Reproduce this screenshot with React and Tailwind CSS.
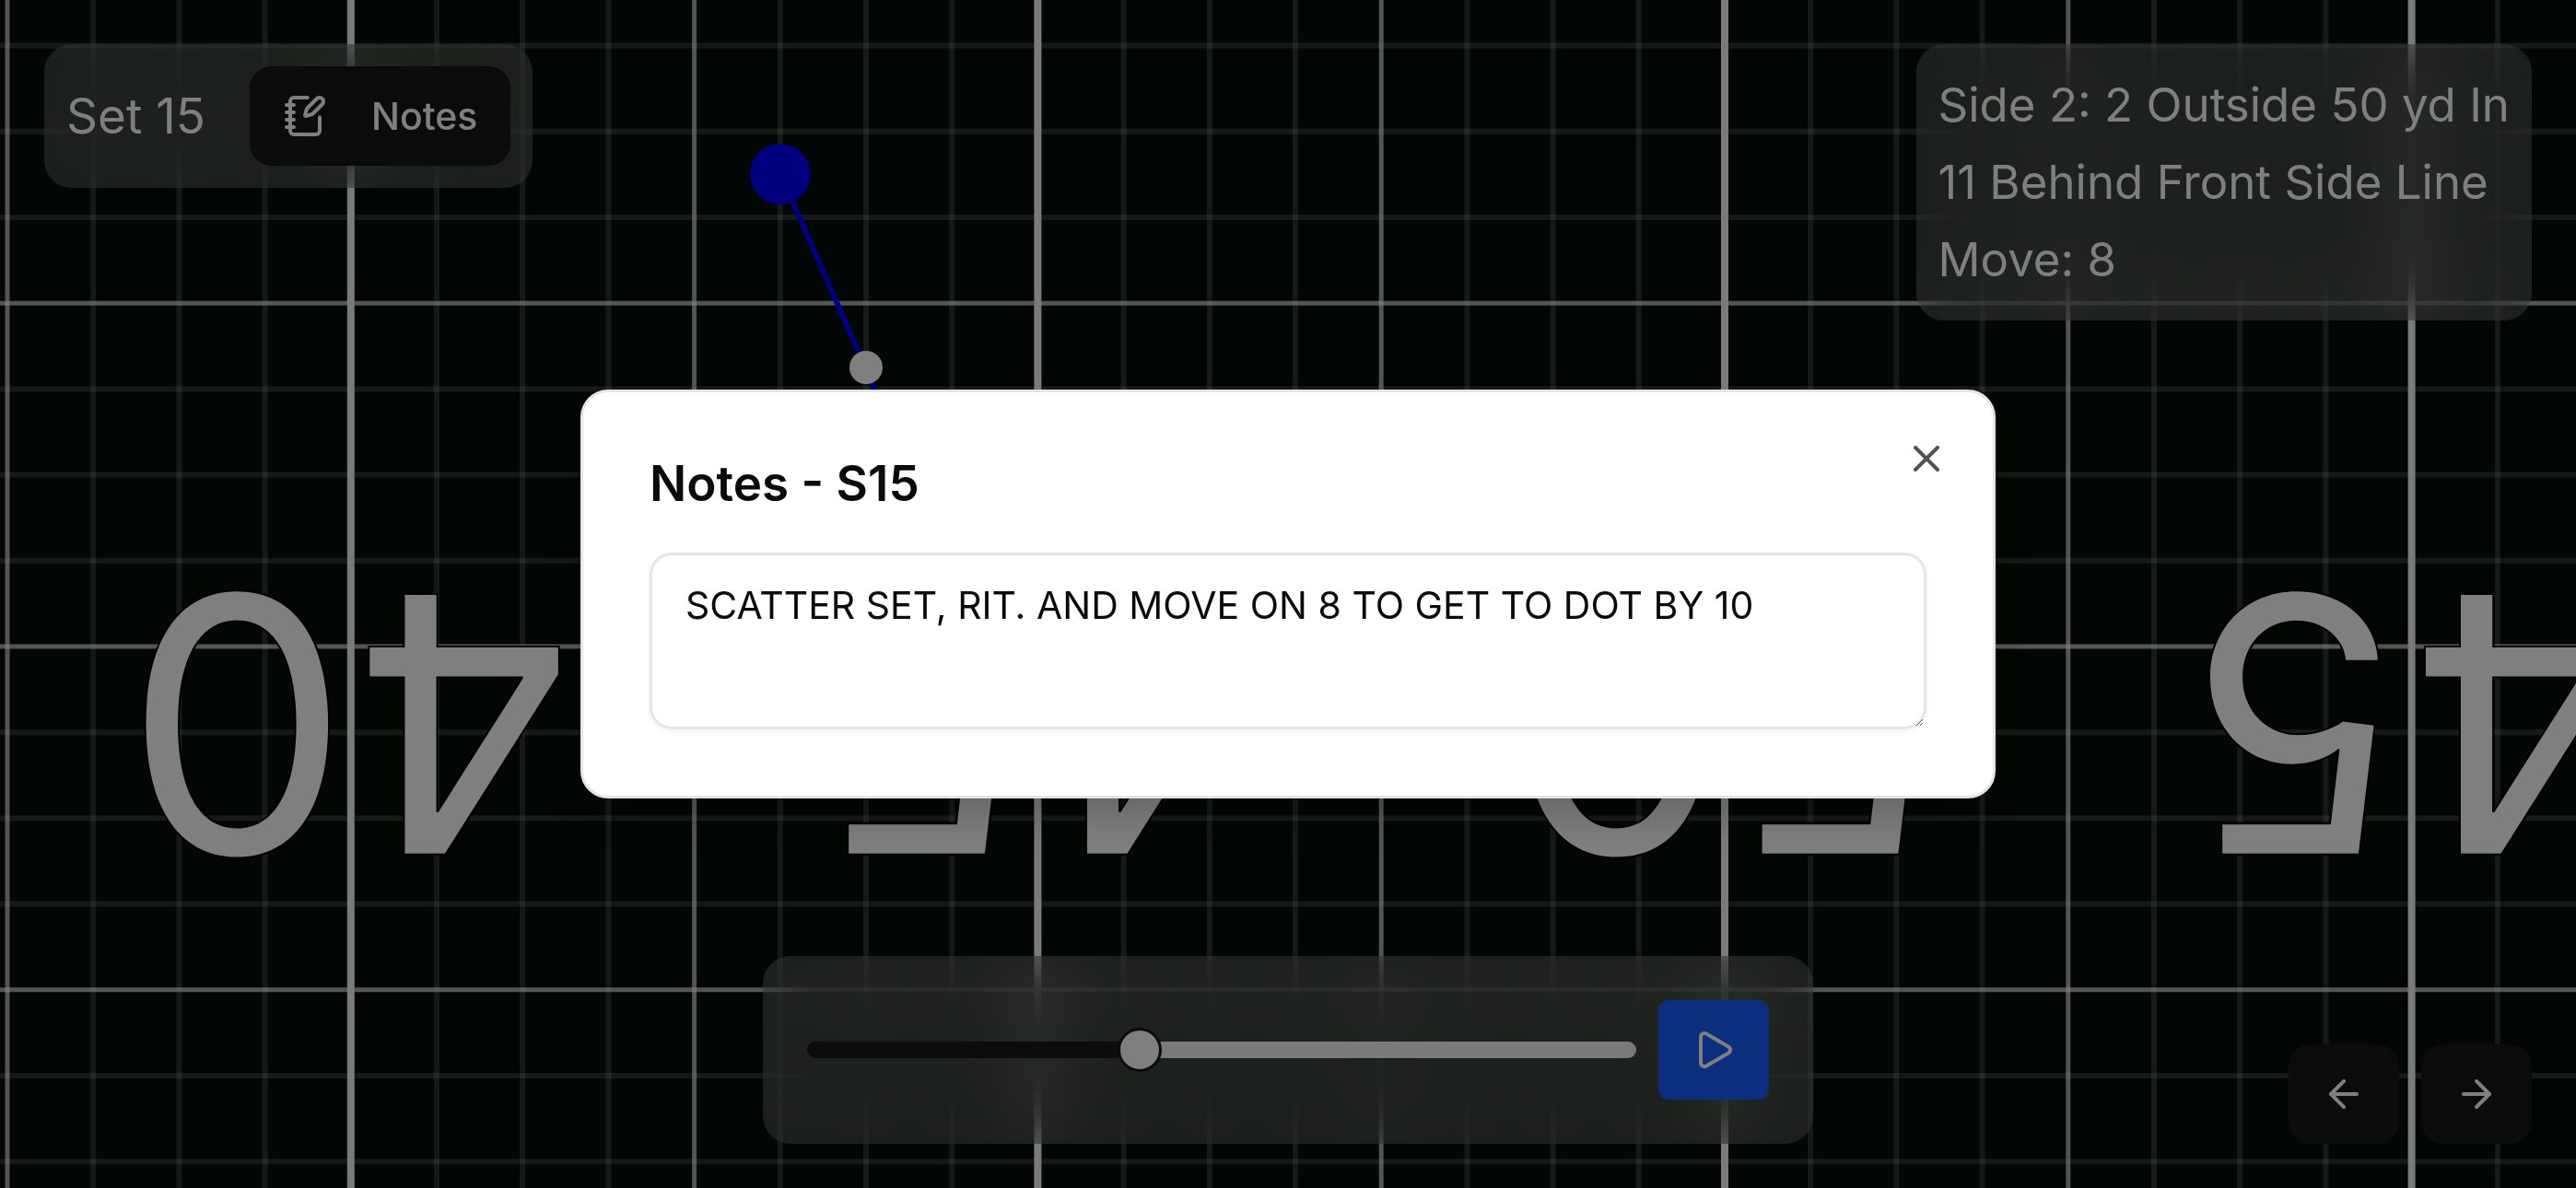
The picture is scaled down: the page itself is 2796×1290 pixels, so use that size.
import { ArrowLeft, ArrowRight, NotebookPen, Play, X } from "lucide-react";

const STEP = 93.2;
const columns = Array.from({ length: 31 }, (_, i) => ({ i, at: 8 + i * STEP }));
const rows = Array.from({ length: 14 }, (_, i) => ({ i, at: 49.6 + i * STEP }));
const yardNumbers = [
  { label: "40", x: 382 },
  { label: "45", x: 1127 },
  { label: "50", x: 1872 },
  { label: "45", x: 2618 },
];

function Field() {
  const minorColumns = columns.filter(({ i }) => i % 4 !== 0);
  const minorRows = rows.filter(({ i }) => i % 4 !== 3);
  return (
    <svg
      className="absolute inset-0 size-full"
      viewBox="0 0 2796 1290"
      preserveAspectRatio="xMidYMid slice"
      aria-label="Field"
    >
      <g stroke="#ffffff" strokeOpacity="0.16" strokeWidth="6">
        {minorColumns.map(({ i, at }) => (
          <line key={`c${i}`} x1={at} x2={at} y1="0" y2="1290" />
        ))}
        {minorRows.map(({ i, at }) => (
          <line key={`r${i}`} x1="0" x2="2796" y1={at} y2={at} />
        ))}
      </g>
      <g stroke="#ffffff" strokeOpacity="0.65" strokeWidth="5">
        {columns.filter(({ i }) => i % 8 === 0).map(({ i, at }) => (
          <line key={`c${i}`} x1={at} x2={at} y1="0" y2="1290" />
        ))}
        {rows.filter(({ i }) => i % 4 === 3).map(({ i, at }) => (
          <line key={`r${i}`} x1="0" x2="2796" y1={at} y2={at} />
        ))}
      </g>
      <g stroke="#f4f4f4" strokeWidth="8">
        {columns.filter(({ i }) => i % 8 === 4).map(({ i, at }) => (
          <line key={`c${i}`} x1={at} x2={at} y1="0" y2="1290" />
        ))}
      </g>
      <g
        className="font-['Inter',sans-serif]"
        fill="#ffffff"
        stroke="#000000"
        strokeWidth="4"
        paintOrder="stroke"
        fontSize="386"
        textAnchor="middle"
      >
        {yardNumbers.map(({ label, x }) => (
          <text key={x} x={x} y="646" transform={`rotate(180 ${x} 646)`}>
            {label}
          </text>
        ))}
      </g>
      <line x1="847" y1="189" x2="960" y2="446" stroke="#0000ff" strokeWidth="6" />
      <circle cx="847" cy="189" r="33" fill="#0000ff" />
      <circle cx="940" cy="399" r="18" fill="#ffffff" />
    </svg>
  );
}

export default function App() {
  return (
    <div className="relative flex h-screen flex-col justify-between overflow-hidden bg-[#040e06] p-12 font-['Inter',sans-serif] text-white">
      <Field />

      <header className="relative flex items-start justify-between">
        <section className="flex items-center gap-12 rounded-[30px] bg-white/20 p-6 backdrop-blur-[36px]">
          <h1 className="text-[53px] leading-[84px]">Set 15</h1>
          <button
            type="button"
            className="flex h-27 items-center gap-12 rounded-3xl bg-neutral-900 px-9 text-[41px] font-medium leading-[60px]"
          >
            <NotebookPen className="size-12" />
            Notes
          </button>
        </section>
        <section className="rounded-[30px] bg-white/20 p-6 text-[51px] leading-[84px] backdrop-blur-[36px]">
          <p>Side 2: 2 Outside 50 yd In</p>
          <p>11 Behind Front Side Line</p>
          <p>Move: 8</p>
        </section>
      </header>

      <footer className="relative grid grid-cols-[1fr_auto_1fr] items-end">
        <section className="col-start-2 flex w-[1140px] items-center gap-6 rounded-[30px] bg-white/20 p-12 backdrop-blur-[36px]">
          <input
            type="range"
            aria-label="Playback position"
            min="0"
            max="1000"
            defaultValue="396"
            className="h-[18px] min-w-0 flex-1 appearance-none rounded-full bg-[linear-gradient(to_right,#171717_40%,#f5f5f5_40%)] [&::-webkit-slider-thumb]:size-12 [&::-webkit-slider-thumb]:appearance-none [&::-webkit-slider-thumb]:rounded-full [&::-webkit-slider-thumb]:border-3 [&::-webkit-slider-thumb]:border-solid [&::-webkit-slider-thumb]:border-neutral-900 [&::-webkit-slider-thumb]:bg-white"
          />
          <button
            type="button"
            aria-label="Play"
            className="flex h-27 w-30 items-center justify-center rounded-xl bg-[#195dfc]"
          >
            <Play className="size-12" />
          </button>
        </section>
        <nav className="flex justify-end gap-6">
          <button type="button" aria-label="Previous set" className="flex h-27 w-30 items-center justify-center rounded-3xl bg-neutral-900">
            <ArrowLeft className="size-12" />
          </button>
          <button type="button" aria-label="Next set" className="flex h-27 w-30 items-center justify-center rounded-3xl bg-neutral-900">
            <ArrowRight className="size-12" />
          </button>
        </nav>
      </footer>

      <div className="fixed inset-0 flex items-center justify-center bg-black/50">
        <div
          role="dialog"
          aria-modal="true"
          aria-labelledby="notes-title"
          className="relative flex w-full max-w-[1536px] flex-col gap-12 rounded-[30px] border-3 border-neutral-200 bg-white p-18 text-neutral-950 shadow-2xl"
        >
          <h2 id="notes-title" className="text-[53px] font-semibold leading-[54px]">
            Notes - S15
          </h2>
          <textarea
            aria-labelledby="notes-title"
            spellCheck="false"
            defaultValue="SCATTER SET, RIT. AND MOVE ON 8 TO GET TO DOT BY 10"
            className="block h-48 w-full resize rounded-3xl border-3 border-neutral-200 px-9 py-6 text-[41px] leading-[60px] shadow-[0_3px_6px_rgba(0,0,0,0.05)]"
          />
          <button type="button" aria-label="Close" className="absolute top-12 right-12 opacity-70">
            <X className="size-12" />
          </button>
        </div>
      </div>
    </div>
  );
}
